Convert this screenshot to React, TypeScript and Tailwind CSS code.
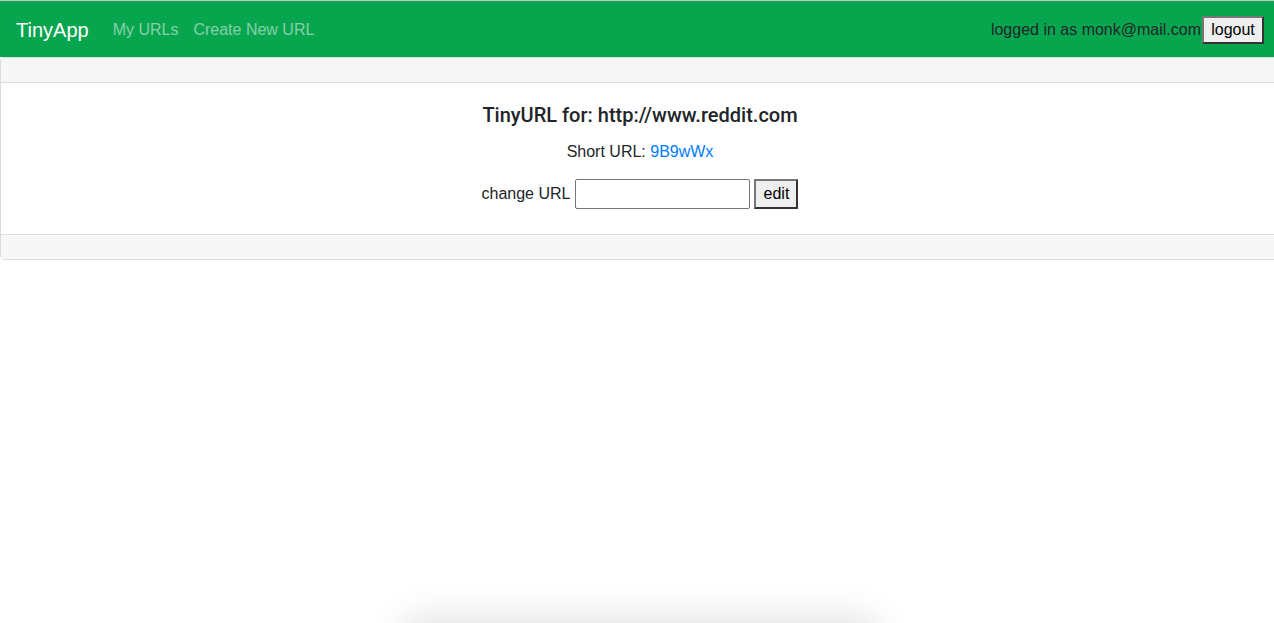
export default function App() {
  return (
    <div className="relative min-h-[623px] w-[1274px] overflow-hidden bg-white text-[#212529]" style={{ fontFamily: '"Liberation Sans", Arial, sans-serif' }}>
      <div className="border-t border-[#c8c8c8]">
        <nav className="flex h-[56px] items-center bg-[#08a54f] pl-4 pr-[10px] pt-[2px]">
          <span className="mr-6 text-[20px] leading-none text-white">TinyApp</span>
          <span className="mr-[15px] text-[16px] text-white/50">My URLs</span>
          <span className="text-[16px] text-white/50">Create New URL</span>
          <div className="ml-auto flex items-center">
            <span className="text-[16px] text-[#212529]">logged in as monk@mail.com</span>
            <button className="ml-px h-[28px] w-[62px] border-2 border-t-[#767676] border-l-[#767676] border-r-[#333] border-b-[#333] bg-[#efefef] text-[16px] leading-none text-black">logout</button>
          </div>
        </nav>
      </div>
      <div className="w-[1282px] rounded-[4px] border border-[#dcdcdc]">
        <div className="h-[25px] border-b border-[#dcdcdc] bg-[#f7f7f7]"></div>
        <div className="flex flex-col items-center pt-[20px] pb-[25px] pr-[2px]">
          <h5 className="text-[20px] font-medium leading-[24px] text-[#212529]" style={{ fontFamily: 'Roboto, "Liberation Sans", sans-serif' }}>TinyURL for: http://www.reddit.com</h5>
          <p className="mt-[13px] text-[16px] leading-[24px]">
            Short URL: <a className="text-[#007bff]">9B9wWx</a>
          </p>
          <div className="mt-[15px] flex items-center">
            <span className="mr-[5px] text-[16px]">change URL</span>
            <input className="h-[30px] w-[175px] rounded-[2px] border border-[#767676] bg-white px-1" />
            <button className="ml-[4px] h-[30px] w-[44px] border-2 border-t-[#767676] border-l-[#767676] border-r-[#333] border-b-[#333] bg-[#efefef] text-[16px] leading-none text-black">edit</button>
          </div>
        </div>
        <div className="h-[25px] border-t border-[#dcdcdc] bg-[#f7f7f7]"></div>
      </div>
      <div className="pointer-events-none absolute left-[400px] top-[615px] h-[40px] w-[480px] rounded-full bg-black/10 blur-[16px]"></div>
    </div>
  );
}
